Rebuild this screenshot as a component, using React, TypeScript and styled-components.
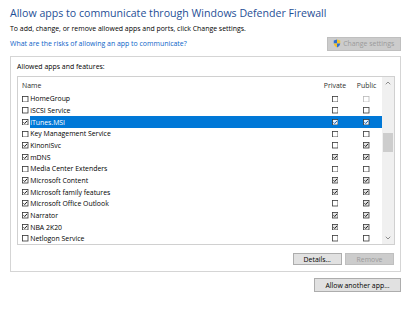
import React from "react";
import styled, { createGlobalStyle, css } from "styled-components";

const GlobalStyle = createGlobalStyle`
  html, body { margin: 0; padding: 0; background: #ffffff; }
  body { font-family: "Segoe UI", "Open Sans", "Noto Sans", sans-serif; color: #000; }
  * { box-sizing: border-box; }
`;

const Page = styled.div`
  width: 417px;
  height: 309px;
  padding: 6px 16px 0 10px;
  display: flex;
  flex-direction: column;
  overflow: hidden;
`;

const Title = styled.h1`
  margin: 0;
  font-size: 10.6px;
  line-height: 14px;
  font-weight: 400;
  color: #1f4f96;
  white-space: nowrap;
`;

const Subtitle = styled.p`
  margin: 3.8px 0 0;
  font-size: 6.95px;
  line-height: 9px;
  white-space: nowrap;
`;

const LinkRow = styled.div`
  margin-top: 4.2px;
  height: 14px;
  display: flex;
  align-items: center;
  justify-content: space-between;
`;

const HelpLink = styled.a`
  font-size: 6.95px;
  line-height: 9px;
  color: #0a64c8;
  text-decoration: none;
  white-space: nowrap;
`;

const WinButton = styled.button<{ $w: number; $h: number; $disabled?: boolean }>`
  width: ${(p) => p.$w}px;
  height: ${(p) => p.$h}px;
  padding: 0;
  font-family: inherit;
  font-size: 6.9px;
  display: flex;
  align-items: center;
  justify-content: center;
  gap: 2px;
  ${(p) =>
    p.$disabled
      ? css`
          background: #cccccc;
          border: 1px solid #bfbfbf;
          color: #9a9a9a;
        `
      : css`
          background: #e1e1e1;
          border: 1px solid #adadad;
          color: #000;
        `}
`;

const GroupBox = styled.div`
  margin-top: 5px;
  border: 1px solid #d5d5d5;
  padding: 5.5px 5px 6px 6px;
  display: flex;
  flex-direction: column;
`;

const GroupLabel = styled.div`
  font-size: 6.95px;
  line-height: 9px;
  white-space: nowrap;
`;

const ListView = styled.div`
  margin-top: 5px;
  height: 169px;
  border: 1px solid #d0d0d0;
  display: flex;
`;

const ListBody = styled.div`
  flex: 1;
  display: flex;
  flex-direction: column;
`;

const HeaderRow = styled.div`
  height: 15.5px;
  padding-left: 4px;
  display: grid;
  grid-template-columns: 1fr 32px 31px;
  align-items: center;
  font-size: 6.9px;
`;

const HeadCell = styled.div<{ $center?: boolean }>`
  text-align: ${(p) => (p.$center ? "center" : "left")};
  color: #2b2b2b;
  white-space: nowrap;
`;

const Row = styled.div`
  height: 11.67px;
  padding-left: 4px;
  display: flex;
  align-items: stretch;
  font-size: 6.9px;
`;

const CheckCell = styled.div`
  width: 7.6px;
  display: flex;
  align-items: center;
`;

const Selection = styled.div<{ $selected?: boolean }>`
  flex: 1;
  display: grid;
  grid-template-columns: 1fr 32px 31px;
  align-items: center;
  background: ${(p) => (p.$selected ? "#0078d7" : "transparent")};
  color: ${(p) => (p.$selected ? "#ffffff" : "#000")};
`;

const NameText = styled.span`
  padding-left: 0.6px;
  white-space: nowrap;
`;

const BoxCell = styled.div`
  display: flex;
  justify-content: center;
  align-items: center;
`;

const ScrollBar = styled.div`
  width: 12px;
  background: #f0f0f0;
  display: flex;
  flex-direction: column;
`;

const ScrollArrow = styled.div`
  height: 12px;
  display: flex;
  align-items: center;
  justify-content: center;
`;

const Track = styled.div`
  flex: 1;
  display: flex;
  flex-direction: column;
  align-items: center;
`;

const Thumb = styled.div<{ $top: number; $h: number }>`
  margin-top: ${(p) => p.$top}px;
  width: 10px;
  height: ${(p) => p.$h}px;
  background: #cdcdcd;
`;

const ButtonRow = styled.div`
  margin-top: 8px;
  display: flex;
  justify-content: flex-end;
  gap: 3.5px;
  padding-right: 1px;
`;

const BottomRow = styled.div`
  margin-top: 6px;
  display: flex;
  justify-content: flex-end;
`;

type BoxKind = "name" | "col";

function CheckBox({
  checked,
  kind,
  disabled,
  selected,
}: {
  checked: boolean;
  kind: BoxKind;
  disabled?: boolean;
  selected?: boolean;
}) {
  const stroke = disabled ? "#b8b8b8" : kind === "col" ? "#3a3a3a" : "#333333";
  const fill = selected ? "#e8f2fc" : kind === "col" && checked ? "#e6e6e6" : "#ffffff";
  return (
    <svg width="6.5" height="6.5" viewBox="0 0 13 13">
      <rect x="1" y="1" width="11" height="11" fill={fill} stroke={stroke} strokeWidth="1.6" />
      {checked && (
        <path
          d="M3 6.6 L5.4 9 L10 3.8"
          fill="none"
          stroke={selected ? "#0b58b0" : "#111"}
          strokeWidth="1.9"
        />
      )}
    </svg>
  );
}

function Chevron({ up }: { up?: boolean }) {
  return (
    <svg width="6" height="4" viewBox="0 0 12 8">
      <path
        d={up ? "M1.5 6.5 L6 2 L10.5 6.5" : "M1.5 1.5 L6 6 L10.5 1.5"}
        fill="none"
        stroke="#606060"
        strokeWidth="1.4"
      />
    </svg>
  );
}

function Shield() {
  return (
    <svg width="8" height="9" viewBox="0 0 16 18">
      <path d="M8 1 L8 9 L1.5 9 L1.5 3 Z" fill="#2f6fd0" />
      <path d="M8 1 L14.5 3 L14.5 9 L8 9 Z" fill="#f2c12e" />
      <path d="M1.5 9 L8 9 L8 17 C4.5 15.5 2 13 1.5 9 Z" fill="#f2c12e" />
      <path d="M8 9 L14.5 9 C14 13 11.5 15.5 8 17 Z" fill="#2f6fd0" />
    </svg>
  );
}

type App = {
  name: string;
  on: boolean;
  priv: boolean;
  pub: boolean;
  selected?: boolean;
  pubDisabled?: boolean;
};

const apps: App[] = [
  { name: "HomeGroup", on: false, priv: false, pub: false, pubDisabled: true },
  { name: "iSCSI Service", on: false, priv: false, pub: false },
  { name: "iTunes.MSI", on: true, priv: true, pub: true, selected: true },
  { name: "Key Management Service", on: false, priv: false, pub: false },
  { name: "KinoniSvc", on: true, priv: false, pub: true },
  { name: "mDNS", on: true, priv: true, pub: true },
  { name: "Media Center Extenders", on: false, priv: false, pub: false },
  { name: "Microsoft Content", on: true, priv: true, pub: true },
  { name: "Microsoft family features", on: true, priv: true, pub: true },
  { name: "Microsoft Office Outlook", on: true, priv: false, pub: true },
  { name: "Narrator", on: true, priv: true, pub: true },
  { name: "NBA 2K20", on: true, priv: true, pub: true },
  { name: "Netlogon Service", on: false, priv: false, pub: false },
];

export default function AppRoot() {
  return (
    <>
      <GlobalStyle />
      <Page>
        <Title>Allow apps to communicate through Windows Defender Firewall</Title>
        <Subtitle>To add, change, or remove allowed apps and ports, click Change settings.</Subtitle>
        <LinkRow>
          <HelpLink href="#">What are the risks of allowing an app to communicate?</HelpLink>
          <WinButton $w={74.5} $h={14} $disabled>
            <Shield />
            Change settings
          </WinButton>
        </LinkRow>
        <GroupBox>
          <GroupLabel>Allowed apps and features:</GroupLabel>
          <ListView>
            <ListBody>
              <HeaderRow>
                <HeadCell>Name</HeadCell>
                <HeadCell $center>Private</HeadCell>
                <HeadCell $center>Public</HeadCell>
              </HeaderRow>
              {apps.map((a) => (
                <Row key={a.name}>
                  <CheckCell>
                    <CheckBox checked={a.on} kind="name" />
                  </CheckCell>
                  <Selection $selected={a.selected}>
                    <NameText>{a.name}</NameText>
                    <BoxCell>
                      <CheckBox checked={a.priv} kind="col" selected={a.selected} />
                    </BoxCell>
                    <BoxCell>
                      <CheckBox
                        checked={a.pub}
                        kind="col"
                        selected={a.selected}
                        disabled={a.pubDisabled}
                      />
                    </BoxCell>
                  </Selection>
                </Row>
              ))}
            </ListBody>
            <ScrollBar>
              <ScrollArrow>
                <Chevron up />
              </ScrollArrow>
              <Track>
                <Thumb $top={44} $h={19} />
              </Track>
              <ScrollArrow>
                <Chevron />
              </ScrollArrow>
            </ScrollBar>
          </ListView>
          <ButtonRow>
            <WinButton $w={48.5} $h={12}>Details...</WinButton>
            <WinButton $w={49} $h={12} $disabled>Remove</WinButton>
          </ButtonRow>
        </GroupBox>
        <BottomRow>
          <WinButton $w={87} $h={14}>Allow another app...</WinButton>
        </BottomRow>
      </Page>
    </>
  );
}
